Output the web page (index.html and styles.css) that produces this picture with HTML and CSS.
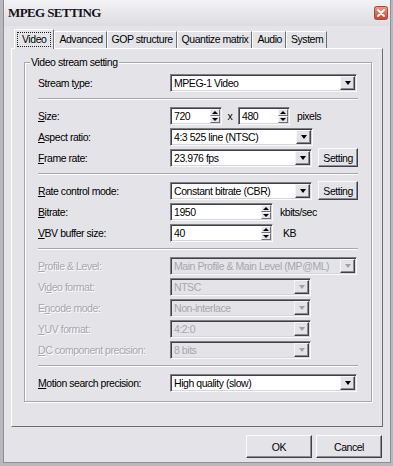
FILE: index.html
```html
<!DOCTYPE html>
<html lang="en">
<head>
    <meta charset="UTF-8">
    <title>MPEG SETTING</title>
    <link rel="stylesheet" href="styles.css">
</head>
<body>
    <div class="window">
        <div class="titlebar">
            <span class="title">MPEG SETTING</span>
            <span class="close">
                <svg width="14" height="14" viewBox="0 0 14 14">
                    <defs>
                        <linearGradient id="cg" x1="0" y1="0" x2="0" y2="1">
                            <stop offset="0" stop-color="#f09a84"/>
                            <stop offset="1" stop-color="#c9432e"/>
                        </linearGradient>
                    </defs>
                    <rect x="0.5" y="0.5" width="13" height="13" rx="2" fill="url(#cg)" stroke="#a9483a"/>
                    <path d="M4 4 L10 10 M10 4 L4 10" stroke="#fff" stroke-width="1.8" stroke-linecap="round"/>
                </svg>
            </span>
        </div>

        <div class="dialog-body">
            <div class="tabs">
                <div class="tab active"><span class="focus">Video</span></div>
                <div class="tab">Advanced</div>
                <div class="tab">GOP structure</div>
                <div class="tab">Quantize matrix</div>
                <div class="tab">Audio</div>
                <div class="tab">System</div>
            </div>

            <div class="panel">
                <div class="group">
                    <span class="legend">Video stream setting</span>

                    <div class="row">
                        <span class="lbl">Stream t<u>y</u>pe:</span>
                        <div class="combo wide"><span class="val">MPEG-1 Video</span><span class="drop"></span></div>
                    </div>

                    <div class="sep"></div>

                    <div class="row">
                        <span class="lbl"><u>S</u>ize:</span>
                        <div class="spin w-size"><span class="val">720</span><span class="arrows"><i class="up"></i><i class="down"></i></span></div>
                        <span class="times">x</span>
                        <div class="spin w-size"><span class="val">480</span><span class="arrows"><i class="up"></i><i class="down"></i></span></div>
                        <span class="unit">pixels</span>
                    </div>
                    <div class="row">
                        <span class="lbl"><u>A</u>spect ratio:</span>
                        <div class="combo mid"><span class="val">4:3 525 line (NTSC)</span><span class="drop"></span></div>
                    </div>
                    <div class="row">
                        <span class="lbl"><u>F</u>rame rate:</span>
                        <div class="combo mid"><span class="val">23.976 fps</span><span class="drop"></span></div>
                        <button class="btn small">Setting</button>
                    </div>

                    <div class="sep"></div>

                    <div class="row">
                        <span class="lbl"><u>R</u>ate control mode:</span>
                        <div class="combo mid"><span class="val">Constant bitrate (CBR)</span><span class="drop"></span></div>
                        <button class="btn small">Setting</button>
                    </div>
                    <div class="row">
                        <span class="lbl"><u>B</u>itrate:</span>
                        <div class="spin w-rate"><span class="val">1950</span><span class="arrows"><i class="up"></i><i class="down"></i></span></div>
                        <span class="unit">kbits/sec</span>
                    </div>
                    <div class="row">
                        <span class="lbl"><u>V</u>BV buffer size:</span>
                        <div class="spin w-rate"><span class="val">40</span><span class="arrows"><i class="up"></i><i class="down"></i></span></div>
                        <span class="unit kb">KB</span>
                    </div>

                    <div class="sep"></div>

                    <div class="row off">
                        <span class="lbl"><u>P</u>rofile &amp; Level:</span>
                        <div class="combo wide"><span class="val">Main Profile &amp; Main Level (MP@ML)</span><span class="drop"></span></div>
                    </div>
                    <div class="row off">
                        <span class="lbl">Vi<u>d</u>eo format:</span>
                        <div class="combo low"><span class="val">NTSC</span><span class="drop"></span></div>
                    </div>
                    <div class="row off">
                        <span class="lbl">E<u>n</u>code mode:</span>
                        <div class="combo low"><span class="val">Non-interlace</span><span class="drop"></span></div>
                    </div>
                    <div class="row off">
                        <span class="lbl"><u>Y</u>UV format:</span>
                        <div class="combo low"><span class="val">4:2:0</span><span class="drop"></span></div>
                    </div>
                    <div class="row off">
                        <span class="lbl"><u>D</u>C component precision:</span>
                        <div class="combo low"><span class="val">8 bits</span><span class="drop"></span></div>
                    </div>

                    <div class="sep"></div>

                    <div class="row">
                        <span class="lbl"><u>M</u>otion search precision:</span>
                        <div class="combo wide"><span class="val">High quality (slow)</span><span class="drop"></span></div>
                    </div>
                </div>
            </div>

            <div class="buttons">
                <button class="btn big">OK</button>
                <button class="btn big">Cancel</button>
            </div>
        </div>
    </div>
</body>
</html>
```

FILE: styles.css
```css
* {
    box-sizing: border-box;
}

body {
    margin: 0;
    background: #b8b8be;
    font-family: "Liberation Sans", Arial, sans-serif;
    font-size: 10.5px;
    letter-spacing: -0.45px;
    color: #000;
}

.window {
    margin-left: 3px;
    width: 388px;
    height: 463px;
    background: #e4e4e8;
    border: 1px solid #8e8e96;
    border-top: none;
}

.titlebar {
    height: 26px;
    display: flex;
    align-items: center;
    justify-content: space-between;
    padding: 0 2px 0 4px;
    background: linear-gradient(#f3f3f6, #dcdce1);
}

.title {
    font-family: "Liberation Serif", serif;
    font-weight: bold;
    font-size: 13px;
    letter-spacing: -0.6px;
    color: #14141c;
}

.close svg {
    display: block;
}

.dialog-body {
    padding: 3px 7px 0 7px;
}

/* tabs */
.tabs {
    display: flex;
    align-items: flex-end;
    height: 19px;
    padding-left: 3px;
}

.tab {
    height: 17px;
    line-height: 15px;
    padding: 0 3px 0 4px;
    border: 1px solid;
    border-color: #fff #6e6e74 transparent #fff;
    border-bottom: none;
    white-space: nowrap;
}

.tab.active {
    height: 20px;
    margin-bottom: -1px;
    padding: 2px 2px 0 2px;
    position: relative;
    z-index: 1;
    background: #e4e4e8;
}

.focus {
    display: inline-block;
    border: 1px dotted #222;
    padding: 0 4px;
    line-height: 13px;
}

.panel {
    height: 379px;
    border: 1px solid;
    border-color: #fff #6e6e74 #6e6e74 #fff;
    padding: 13px 10px 0 12px;
}

/* group box */
.group {
    position: relative;
    border: 1px solid #a6a6ac;
    box-shadow: inset 1px 1px #fff, 1px 1px #fff;
    padding: 9px 13px 8px 13px;
}

.legend {
    position: absolute;
    top: -7px;
    left: 5px;
    padding: 0 1px;
    line-height: 13px;
    background: #e4e4e8;
}

.row {
    display: flex;
    align-items: center;
    height: 21px;
    white-space: nowrap;
}

.lbl {
    width: 132px;
    flex: none;
}

.sep {
    height: 2px;
    margin: 5px 0;
    border-top: 1px solid #a6a6ac;
    border-bottom: 1px solid #fff;
}

/* combo boxes and spin boxes */
.combo,
.spin {
    height: 18px;
    display: flex;
    padding: 1px;
    background: #fff;
    border: 1px solid;
    border-color: #7c7c82 #fafafa #fafafa #7c7c82;
    box-shadow: inset 1px 1px #404046, inset -1px -1px #d6d6da;
}

.val {
    flex: 1;
    padding-left: 2px;
    line-height: 14px;
    overflow: hidden;
}

.wide {
    width: 187px;
}

.mid {
    width: 143px;
}

.low {
    width: 141px;
}

.w-size {
    width: 52px;
}

.w-rate {
    width: 103px;
}

.drop {
    width: 15px;
    height: 14px;
    flex: none;
    display: flex;
    align-items: center;
    justify-content: center;
    background: #e4e4e8;
    border: 1px solid;
    border-color: #f6f6f8 #404046 #404046 #f6f6f8;
    box-shadow: inset -1px -1px #8a8a90;
}

.drop::after {
    content: "";
    border-top: 4px solid #000;
    border-left: 3.5px solid transparent;
    border-right: 3.5px solid transparent;
}

.arrows {
    width: 10px;
    flex: none;
    display: flex;
    flex-direction: column;
}

.arrows i {
    flex: 1;
    display: flex;
    align-items: center;
    justify-content: center;
    background: #e4e4e8;
    border: 1px solid;
    border-color: #f6f6f8 #707076 #707076 #f6f6f8;
}

.arrows .up::after {
    content: "";
    border-bottom: 3px solid #000;
    border-left: 3px solid transparent;
    border-right: 3px solid transparent;
}

.arrows .down::after {
    content: "";
    border-top: 3px solid #000;
    border-left: 3px solid transparent;
    border-right: 3px solid transparent;
}

.times {
    width: 16px;
    text-align: center;
}

.unit {
    margin-left: 7px;
}

.unit.kb {
    margin-left: 10px;
}

/* disabled rows */
.off .lbl {
    color: #a6a6ac;
    text-shadow: 1px 1px 0 #fff;
}

.off .combo {
    background: #e4e4e8;
    color: #a6a6ac;
}

.off .drop::after {
    border-top-color: #a0a0a6;
}

/* buttons */
.btn {
    font: inherit;
    letter-spacing: inherit;
    color: #000;
    background: #e4e4e8;
    border: 1px solid;
    border-color: #fbfbfc #404046 #404046 #fbfbfc;
    box-shadow: inset -1px -1px #8c8c92;
    padding: 0;
}

.btn.small {
    width: 40px;
    height: 19px;
    margin-left: 6px;
}

.buttons {
    display: flex;
    justify-content: flex-end;
    gap: 4px;
    margin-top: 8px;
    padding-right: 1px;
}

.btn.big {
    width: 66px;
    height: 23px;
}
```
